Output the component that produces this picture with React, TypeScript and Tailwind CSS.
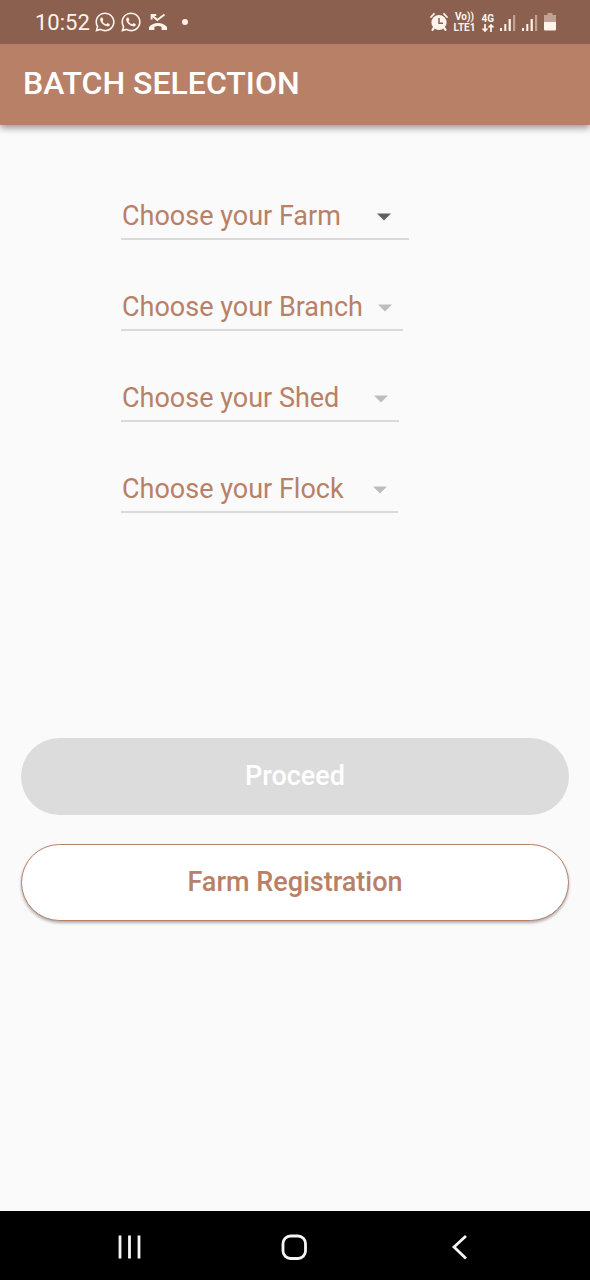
import React from "react";
import { FaWhatsapp } from "react-icons/fa";

type Field = { name: string; width: string; arrow: string; enabled: boolean };

const fields: Field[] = [
  { name: "Farm", width: "w-72", arrow: "right-[17px] text-[#616161]", enabled: true },
  { name: "Branch", width: "w-[282px]", arrow: "right-2.5 text-[#bdbdbd]", enabled: false },
  { name: "Shed", width: "w-[278px]", arrow: "right-2.5 text-[#bdbdbd]", enabled: false },
  { name: "Flock", width: "w-[277px]", arrow: "right-2.5 text-[#bdbdbd]", enabled: false },
];

function MissedCallIcon() {
  return (
    <svg className="h-5 w-5" viewBox="0 0 20 20" fill="none" aria-hidden="true">
      <path d="M1 18v-3C5.500 9.600 14.500 9.600 19 15v3h-5.400v-3.300c-2.300-.8-4.900-.8-7.200 0V18z" fill="currentColor" />
      <path d="M3.600 7.500V3h4.600M3.800 3.200 9.300 8 16.500 2.500" stroke="currentColor" strokeWidth="1.900" />
    </svg>
  );
}

function AlarmIcon() {
  return (
    <svg className="h-5 w-[18px]" viewBox="0 0 18 20" fill="none" aria-hidden="true">
      <circle cx="9" cy="10.500" r="7.600" fill="currentColor" />
      <path d="M1 5 4 1.800M17 5l-3-3.200" stroke="currentColor" strokeWidth="1.800" strokeLinecap="round" />
      <path d="m4 15.500-1.500 2.300M14 15.500l1.500 2.300" stroke="currentColor" strokeWidth="2.200" strokeLinecap="round" />
      <path d="M9 6v5.200h4" stroke="#8c604e" strokeWidth="1.500" />
    </svg>
  );
}

function SignalIcon() {
  return (
    <svg className="h-[18px] w-4" viewBox="0 0 16 18" fill="currentColor" aria-hidden="true">
      <rect x="0" y="15" width="2" height="3" />
      <rect x="4.300" y="11" width="2" height="7" />
      <rect x="8.600" y="6" width="2.200" height="12" />
      <rect x="13" y="2" width="2.200" height="16" opacity=".45" />
    </svg>
  );
}

function BatteryIcon() {
  return (
    <svg className="h-[18px] w-3" viewBox="0 0 12 18" fill="currentColor" aria-hidden="true">
      <path d="M3.500 0h5v2H12v7H0V2h3.500z" opacity=".45" />
      <path d="M0 9h12v7.500a1 1 0 0 1-1 1H1a1 1 0 0 1-1-1z" />
    </svg>
  );
}

function DataArrowsIcon() {
  return (
    <svg className="h-2 w-3" viewBox="0 0 12 8" fill="none" stroke="currentColor" strokeWidth="1.700" aria-hidden="true">
      <path d="M3 0v7M.5 4.500 3 7l2.500-2.500M9 8V1M6.500 3.500 9 1l2.500 2.500" />
    </svg>
  );
}

function StatusBar() {
  return (
    <div className="flex h-11 items-center justify-between bg-[#8c604e] pr-[34px] pl-[35px] text-[#fff3ec]">
      <div className="flex items-center gap-1">
        <span className="pt-0.5 text-[22px] leading-6">10:52</span>
        <FaWhatsapp className="size-[22px]" aria-hidden="true" />
        <FaWhatsapp className="mr-0.5 size-[22px]" aria-hidden="true" />
        <MissedCallIcon />
        <span className="ml-2.5 size-1.5 rounded-full bg-current" />
      </div>
      <div className="flex items-center gap-1.5">
        <AlarmIcon />
        <div className="flex flex-col items-center text-[10px] leading-[11px] font-bold">
          <span>Vo))</span>
          <span>LTE1</span>
        </div>
        <div className="flex flex-col items-center text-[10px] leading-[11px] font-bold">
          <span>4G</span>
          <DataArrowsIcon />
        </div>
        <div className="flex items-center gap-1.5">
          <SignalIcon />
          <SignalIcon />
        </div>
        <BatteryIcon />
      </div>
    </div>
  );
}

function SelectField({ field }: { field: Field }) {
  const label = `Choose your ${field.name}`;
  return (
    <div className={`relative border-b-2 border-[#dadada] ${field.width}`}>
      <select
        aria-label={label}
        disabled={!field.enabled}
        className="block h-12 w-full appearance-none bg-transparent pt-1 pl-px text-[27px] leading-8 text-[#b98068] opacity-100 outline-none"
      >
        <option>{label}</option>
      </select>
      <svg className={`pointer-events-none absolute top-[23px] h-2 w-4 ${field.arrow}`} viewBox="0 0 16 8" fill="currentColor" aria-hidden="true">
        <path d="M1 .5h14l-7 7z" />
      </svg>
    </div>
  );
}

function NavBar() {
  return (
    <nav className="flex h-[69px] items-center justify-around bg-black px-[47px] text-[#f5f5f5]">
      <button type="button" aria-label="Recent apps" className="flex size-12 items-center justify-center">
        <svg className="size-7" viewBox="0 0 28 28" fill="none" stroke="currentColor" strokeWidth="2.800" aria-hidden="true">
          <path d="M4 3.500v23M13.500 3.500v23M23 3.500v23" />
        </svg>
      </button>
      <button type="button" aria-label="Home" className="flex size-12 items-center justify-center">
        <svg className="size-7" viewBox="0 0 28 28" fill="none" stroke="currentColor" strokeWidth="2.800" aria-hidden="true">
          <rect x="2" y="4" width="22.500" height="22.500" rx="7.500" />
        </svg>
      </button>
      <button type="button" aria-label="Back" className="flex size-12 items-center justify-center">
        <svg className="size-7" viewBox="0 0 28 28" fill="none" stroke="currentColor" strokeWidth="2.800" aria-hidden="true">
          <path d="M20 4 8 15l12 11.500" />
        </svg>
      </button>
    </nav>
  );
}

export default function App() {
  return (
    <div className="flex min-h-screen flex-col bg-[#fafafa] font-['Roboto',sans-serif]">
      <StatusBar />
      <header className="flex h-[81px] items-center bg-[#b98068] px-[23px] pb-1 shadow-[0_3px_7px_rgba(0,0,0,0.4)] [clip-path:inset(0_0_-16px_0)]">
        <h1 className="text-[32px] leading-10 font-medium text-white">BATCH SELECTION</h1>
      </header>
      <main className="flex flex-1 flex-col px-[21px] pt-[65px]">
        <form className="flex flex-col gap-[41px] pl-25">
          {fields.map((field) => (
            <SelectField key={field.name} field={field} />
          ))}
        </form>
        <div className="mt-[225px] flex flex-col gap-[29px] pb-10">
          <button type="button" disabled className="h-[77px] w-full rounded-full bg-[#dcdcdc] text-[27px] font-medium text-white">
            Proceed
          </button>
          <button
            type="button"
            className="h-[77px] w-full rounded-full border border-[#b98068] bg-white text-[27px] font-medium text-[#b98068] shadow-[0_2px_3px_rgba(0,0,0,0.3)]"
          >
            Farm Registration
          </button>
        </div>
      </main>
      <NavBar />
    </div>
  );
}
